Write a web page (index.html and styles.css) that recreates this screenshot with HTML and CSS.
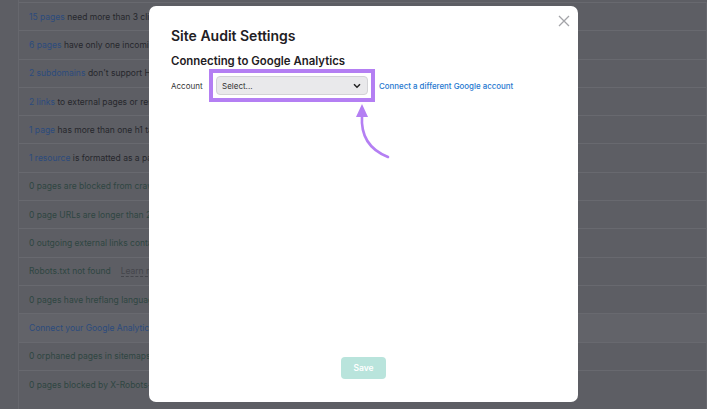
FILE: index.html
```html
<!DOCTYPE html>
<html>
<head>
<meta charset="utf-8">
<link rel="stylesheet" href="styles.css">
</head>
<body>
<div class="page">
  <div class="side"></div>
  <div class="list">
    <div class="row"><a>15 pages</a> need more than 3 clicks to be reached</div>
    <div class="row"><a>6 pages</a> have only one incoming internal link</div>
    <div class="row"><a>2 subdomains</a> don't support HSTS</div>
    <div class="row"><a>2 links</a> to external pages or resources returned 403</div>
    <div class="row"><a>1 page</a> has more than one h1 tag</div>
    <div class="row"><a>1 resource</a> is formatted as a page link</div>
    <div class="row ok">0 pages are blocked from crawling</div>
    <div class="row ok">0 page URLs are longer than 200 characters</div>
    <div class="row ok">0 outgoing external links contain nofollow</div>
    <div class="row ok">Robots.txt not found <span class="learn">Learn more</span></div>
    <div class="row ok">0 pages have hreflang language mismatch</div>
    <div class="row hl"><a>Connect your Google Analytics account</a></div>
    <div class="row ok">0 orphaned pages in sitemaps</div>
    <div class="row ok">0 pages blocked by X-Robots-Tag</div>
  </div>
</div>

<div class="modal">
  <div class="close">
    <svg width="12" height="12" viewBox="0 0 12 12"><path d="M1 1 L11 11 M11 1 L1 11" stroke="#a3a4a8" stroke-width="1.3" fill="none"/></svg>
  </div>
  <h1 class="title">Site Audit Settings</h1>
  <h2 class="subtitle">Connecting to Google Analytics</h2>
  <div class="field">
    <span class="label">Account</span>
    <div class="hlbox">
      <div class="select">
        <span>Select...</span>
        <svg width="8" height="6" viewBox="0 0 8 6"><path d="M1 1.2 L4 4.2 L7 1.2" stroke="#222" stroke-width="1.5" fill="none"/></svg>
      </div>
    </div>
    <a class="connect">Connect a different Google account</a>
  </div>
  <svg class="arrow" width="60" height="70" viewBox="0 0 60 70">
    <path d="M14 14 Q 12 44 40 55" stroke="#b47ff3" stroke-width="2.6" fill="none" stroke-linecap="round"/>
    <path d="M8 15 L14 2 L20 15 Z" fill="#b47ff3"/>
  </svg>
  <div class="spacer"></div>
  <div class="actions">
    <button class="save">Save</button>
  </div>
</div>
</body>
</html>
```

FILE: styles.css
```css
html, body {
  margin: 0;
  padding: 0;
  background: #5d5e64;
  font-family: Inter, "Noto Sans", sans-serif;
  overflow: hidden;
}
.page {
  display: flex;
  width: 707px;
  height: 409px;
  padding-top: 2px;
  box-sizing: border-box;
}
.side {
  width: 18px;
  border-right: 1px solid #66676d;
  margin-top: -2px;
  flex-shrink: 0;
}
.list {
  flex: 1;
  border-right: 1px solid #66676d;
}
.row {
  height: 28.3px;
  box-sizing: border-box;
  border-top: 1px solid #68696f;
  padding-left: 10px;
  display: flex;
  align-items: center;
  font-size: 8.5px;
  color: #26272c;
  white-space: nowrap;
}
.row a { color: #2c4b7d; margin-right: 2.5px; }
.row.ok { color: #2f4642; }
.row.hl { background: #626369; }
.learn {
  color: #44454b;
  margin-left: 10px;
  border-bottom: 1px dashed #44454b;
}
.modal {
  position: absolute;
  left: 149px;
  top: 6px;
  width: 429px;
  height: 396px;
  background: #fff;
  border-radius: 7px;
  box-sizing: border-box;
  padding: 21px 22px 23px 22px;
  display: flex;
  flex-direction: column;
}
.close {
  position: absolute;
  right: 8px;
  top: 9px;
  width: 12px;
  height: 12px;
}
.close svg { display: block; }
.title {
  margin: 0;
  font-size: 14px;
  font-weight: 600;
  color: #1f2024;
  line-height: 17px;
}
.subtitle {
  margin: 10px 0 0 0;
  font-size: 11.4px;
  font-weight: 600;
  color: #1f2024;
  line-height: 14px;
}
.field {
  display: flex;
  align-items: center;
  margin-top: 1px;
}
.label {
  font-size: 8px;
  color: #333;
  width: 38px;
}
.hlbox {
  border: 4px solid #b47ff3;
  padding: 3px 3px;
  width: 166px;
  box-sizing: border-box;
}
.select {
  height: 17px;
  background: #e9e9eb;
  border: 1px solid #d3d3d6;
  border-radius: 4px;
  display: flex;
  align-items: center;
  justify-content: space-between;
  padding: 0 6px 0 5px;
  font-size: 8px;
  color: #333;
}
.select svg { display: block; }
.connect {
  margin-left: 4px;
  font-size: 7.9px;
  font-weight: 500;
  color: #1e77cf;
}
.arrow {
  position: absolute;
  left: 199px;
  top: 96px;
}
.spacer { flex: 1; }
.actions {
  display: flex;
  justify-content: center;
}
.save {
  width: 45px;
  height: 22px;
  background: #b9e4dc;
  border: none;
  border-radius: 4px;
  color: #fff;
  font-family: Inter, sans-serif;
  font-size: 8.5px;
  font-weight: 600;
  padding: 0;
}
```
